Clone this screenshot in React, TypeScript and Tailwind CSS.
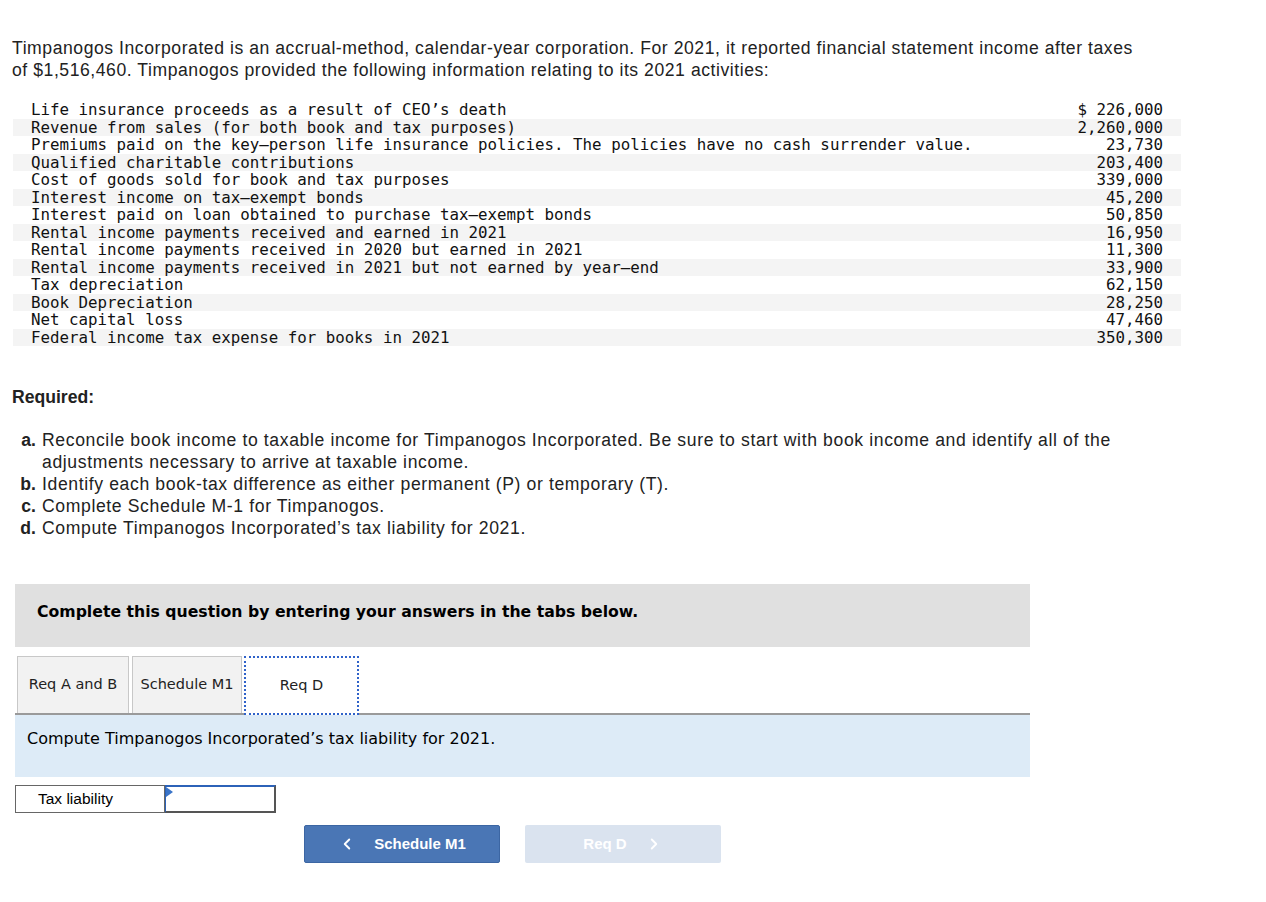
import { ChevronLeft, ChevronRight } from "lucide-react";

const rows: [string, string][] = [
  ["Life insurance proceeds as a result of CEO’s death", "$ 226,000"],
  ["Revenue from sales (for both book and tax purposes)", "2,260,000"],
  [
    "Premiums paid on the key–person life insurance policies. The policies have no cash surrender value.",
    "23,730",
  ],
  ["Qualified charitable contributions", "203,400"],
  ["Cost of goods sold for book and tax purposes", "339,000"],
  ["Interest income on tax–exempt bonds", "45,200"],
  ["Interest paid on loan obtained to purchase tax–exempt bonds", "50,850"],
  ["Rental income payments received and earned in 2021", "16,950"],
  ["Rental income payments received in 2020 but earned in 2021", "11,300"],
  ["Rental income payments received in 2021 but not earned by year–end", "33,900"],
  ["Tax depreciation", "62,150"],
  ["Book Depreciation", "28,250"],
  ["Net capital loss", "47,460"],
  ["Federal income tax expense for books in 2021", "350,300"],
];

const required = [
  {
    letter: "a.",
    text: "Reconcile book income to taxable income for Timpanogos Incorporated. Be sure to start with book income and identify all of the adjustments necessary to arrive at taxable income.",
  },
  { letter: "b.", text: "Identify each book-tax difference as either permanent (P) or temporary (T)." },
  { letter: "c.", text: "Complete Schedule M-1 for Timpanogos." },
  { letter: "d.", text: "Compute Timpanogos Incorporated’s tax liability for 2021." },
];

export default function App() {
  const sans = "font-['Liberation_Sans',Arial,sans-serif]";
  const verdana = "font-['DejaVu_Sans',Verdana,sans-serif]";

  return (
    <div className={`min-h-[902px] bg-white text-[#222] ${sans} pt-[37px] pl-3`}>
      <p className="w-[1140px] text-[17.6px] leading-[22px] tracking-[0.55px]">
        Timpanogos Incorporated is an accrual-method, calendar-year corporation. For 2021, it reported
        financial statement income after taxes of $1,516,460. Timpanogos provided the following
        information relating to its 2021 activities:
      </p>

      <div className="mt-[20px] ml-[1px] w-[1168px] font-['DejaVu_Sans_Mono',monospace] text-[15.8px] leading-[17.5px] text-[#111]">
        {rows.map(([label, value], i) => (
          <div
            key={i}
            className={`flex justify-between pl-[18px] pr-[18px] ${i % 2 === 1 ? "bg-[#f4f4f4]" : "bg-white"}`}
          >
            <span className="whitespace-pre">{label}</span>
            <span className="whitespace-pre">{value}</span>
          </div>
        ))}
      </div>

      <div className="mt-[40px] text-[17.6px] leading-[22px] font-bold">Required:</div>

      <ol className="mt-[21px] w-[1110px] text-[17.6px] leading-[22px] tracking-[0.62px]">
        {required.map((r) => (
          <li key={r.letter} className="flex">
            <span className="w-[30px] shrink-0 text-right pr-[6px] font-bold tracking-normal">{r.letter}</span>
            <span>{r.text}</span>
          </li>
        ))}
      </ol>

      <div className={`mt-[45px] ml-[3px] w-[1015px] ${verdana}`}>
        <div className="h-[63px] bg-[#e0e0e0] pl-[22px] pt-[16px] text-[15.7px] font-bold text-black">
          Complete this question by entering your answers in the tabs below.
        </div>

        <div className="mt-[9px] flex items-end border-b-2 border-[#9a9a9a] pl-[2px] text-[14.5px] text-[#222]">
          <div className="mr-[3px] flex h-[57px] w-[112px] items-center justify-center border border-b-0 border-[#c8c8c8] bg-[#f2f2f2]">
            Req A and B
          </div>
          <div className="mr-[2px] flex h-[57px] w-[110px] items-center justify-center border border-b-0 border-[#c8c8c8] bg-[#f2f2f2]">
            Schedule M1
          </div>
          <div className="-mb-[2px] flex h-[59px] w-[115px] items-center justify-center border-2 border-dotted border-[#2f62c9] bg-white">
            Req D
          </div>
        </div>

        <div className="h-[62px] bg-[#ddebf7] pl-[12px] pt-[12px] text-[16px] text-black">
          Compute Timpanogos Incorporated’s tax liability for 2021.
        </div>

        <div className={`mt-[8px] flex h-[28px] w-[261px] ${sans} text-[15.5px]`}>
          <div className="flex w-[150px] items-center border border-[#666] pl-[22px] text-black">
            Tax liability
          </div>
          <div className="relative w-[111px] border-2 border-l border-[#2c62b8] border-b-[#555] border-r-[#555]">
            <div className="absolute left-0 top-0 h-0 w-0 border-y-[5px] border-l-[7px] border-y-transparent border-l-[#3a74c8]" />
          </div>
        </div>

        <div className={`mt-[12px] flex gap-[25px] pl-[289px] ${sans}`}>
          <button className="flex h-[38px] w-[196px] items-center justify-center gap-[18px] rounded-[2px] border border-[#3c66a3] bg-[#4a76b5] text-[15px] font-bold text-white">
            <ChevronLeft size={18} strokeWidth={2.5} />
            <span>Schedule M1</span>
          </button>
          <button className="flex h-[38px] w-[196px] items-center justify-center gap-[18px] rounded-[2px] bg-[#dae3ef] text-[15px] font-bold text-white">
            <span>Req D</span>
            <ChevronRight size={18} strokeWidth={2.5} />
          </button>
        </div>
      </div>
    </div>
  );
}
